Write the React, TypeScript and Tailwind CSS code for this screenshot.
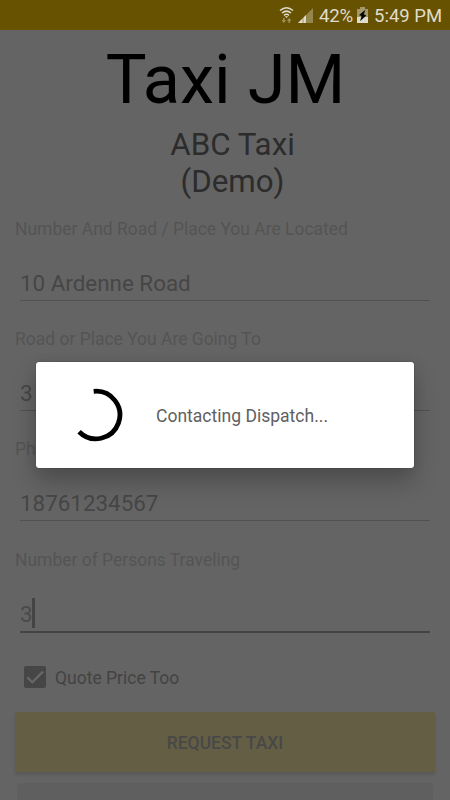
import React from "react";

function StatusBar() {
  return (
    <header className="flex h-[30px] items-center bg-[#665200] pl-[279px] text-[#e0dccc]">
      <svg width="15" height="18" viewBox="0 0 15 18" fill="none" className="shrink-0">
        <path d="M1 4.500Q7.500-1.100 14 4.500M3 7Q7.500 3.200 12 7M5 9.300Q7.500 7.300 10 9.300" stroke="#e0dccc" strokeWidth="1.500" />
        <path d="M5.700 10.200h3.600L7.500 12z" fill="#e0dccc" />
        <path d="M4.800 17l-2.300-2.700h1.600v-2.300h1.400v2.300h1.600zM10.200 12l-2.300 2.700h1.600V17h1.400v-2.300h1.600z" fill="#a19461" />
      </svg>
      <svg width="15" height="15" viewBox="0 0 15 15" className="ml-1 shrink-0">
        <path d="M0 15L15 0v15z" fill="#94864d" />
        <path d="M0 15L8.500 6.500V15z" fill="#e0dccc" />
        <path d="M5 8v7M8.500 5v10" stroke="#665200" strokeWidth=".5" />
      </svg>
      <span className="ml-[6px] w-[35px] pt-px text-[18.700px] leading-[30px] whitespace-nowrap tracking-[-0.300px]">42%</span>
      <svg width="11" height="16" viewBox="0 0 11 16" className="ml-[3px] shrink-0">
        <path d="M3 0h5v2h3v14H0V2h3z" fill="#a3976b" />
        <path d="M0 10h11v6H0z" fill="#e0dccc" />
        <path d="M7.800 3.500L2.500 8l2.400 1-1.400 4.500L9 8.500 6.500 7.600z" fill="#000" stroke="#000" strokeWidth=".5" />
      </svg>
      <span className="ml-[6px] pt-px text-[18.500px] leading-[30px] whitespace-nowrap">5:49 PM</span>
    </header>
  );
}

function Field({ label, value, active = false }: { label: string; value: string; active?: boolean }) {
  return (
    <div className="h-[110.400px]">
      <div className="h-[22px] pl-[15px] text-[17.480px] leading-[22px] text-[#545454]">{label}</div>
      <div className={active ? "mx-5 flex h-[62px] items-end border-b-2 border-[#444444]" : "mx-5 flex h-[61px] items-end border-b border-[#515151]"}>
        <span className={active ? "mb-[3px] text-[22.400px] leading-[28px] text-[#4a4a4a]" : "mb-[3px] text-[22.400px] leading-[28px] text-[#464646]"}>{value}</span>
        {active && <span className="mb-[3px] h-[30px] w-[2.500px] -ml-[0.500px] bg-[#444444]" />}
      </div>
    </div>
  );
}

function ProgressDialog() {
  return (
    <div className="absolute top-[362px] left-9 flex h-[106px] w-[378px] items-center rounded-[3px] bg-white shadow-[0_14px_24px_rgba(0,0,0,0.220),0_2px_14px_rgba(0,0,0,0.080),0_0_1px_rgba(0,0,0,0.500)]">
      <svg width="56" height="56" viewBox="0 0 56 56" fill="none" className="ml-8 shrink-0">
        <path d="M25.700 4.300A23.800 23.800 0 1 1 11.100 44.700" stroke="#000" strokeWidth="4.800" />
      </svg>
      <span className="ml-8 pt-[2px] text-[17.550px] whitespace-nowrap text-[#606060]">Contacting Dispatch...</span>
    </div>
  );
}

export default function App() {
  return (
    <div className="relative h-[800px] w-[450px] overflow-hidden bg-[#646464] font-['Roboto',sans-serif]">
      <StatusBar />
      <main>
        <h1 className="mt-[9px] ml-px h-[82px] text-center text-[68.500px] leading-[82px] whitespace-nowrap text-black">Taxi JM</h1>
        <h2 className="mt-[5px] ml-[15px] h-[74px] text-center text-[31.300px] leading-[37px] text-[#2c2c2c]">
          ABC Taxi<br />(Demo)
        </h2>
        <section className="mt-[17.600px]">
          <Field label="Number And Road / Place You Are Located" value="10 Ardenne Road" />
          <Field label="Road or Place You Are Going To" value="3" />
          <Field label="Phone Number" value="18761234567" />
          <Field label="Number of Persons Traveling" value="3" active />
        </section>
        <div className="mt-[5.400px] flex h-[26px] items-center pl-6">
          <svg width="22" height="22" viewBox="0 0 22 22" fill="none" className="-mt-px shrink-0">
            <rect width="22" height="22" rx="2" fill="#464646" />
            <path d="M3.300 11.300L8.300 16.300 19 5.600" stroke="#686868" strokeWidth="2.200" />
          </svg>
          <span className="ml-[9px] pt-px text-[17.500px] text-[#434343]">Quote Price Too</span>
        </div>
        <div className="mx-[15px] mt-[21px] flex h-[60px] items-center justify-center bg-[#645e44] pt-[3px] text-[17.500px] font-medium text-[#484848] shadow-[0_3px_3px_rgba(0,0,0,0.110)]">REQUEST TAXI</div>
        <div className="mx-[17px] mt-[11px] h-[40px] rounded-[3px] bg-[#5f5f5f]" />
      </main>
      <ProgressDialog />
    </div>
  );
}
